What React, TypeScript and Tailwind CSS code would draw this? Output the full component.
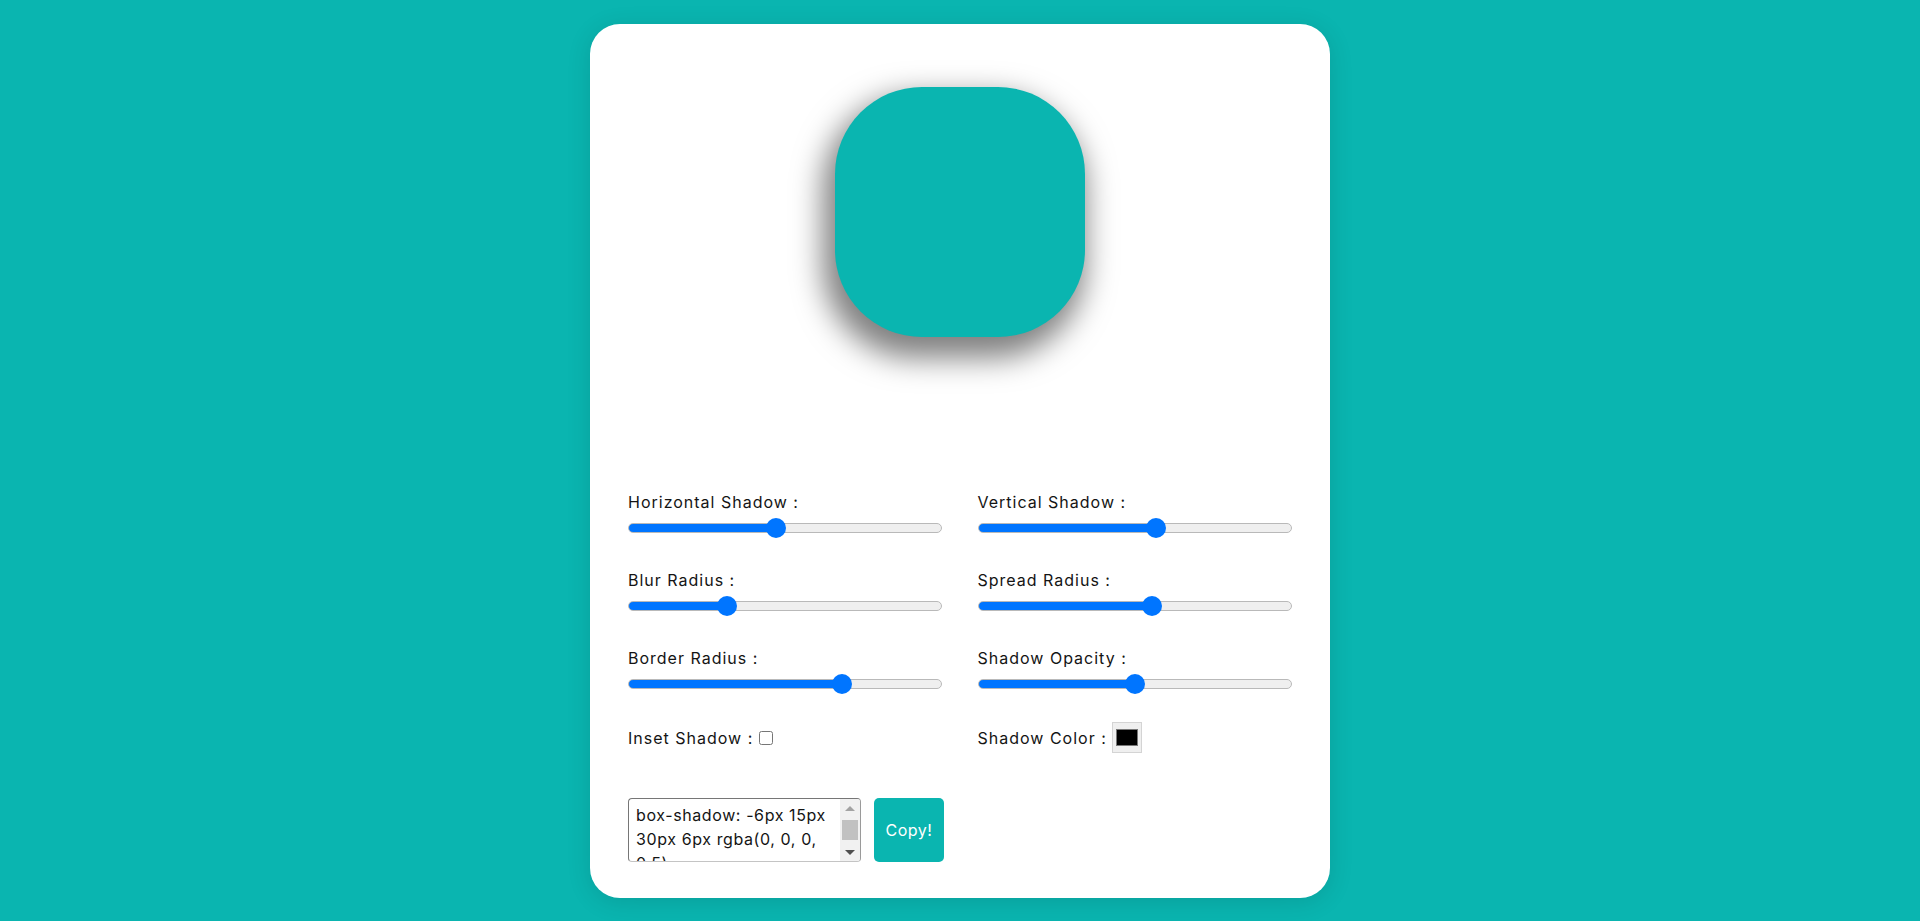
import { useState } from 'react'

const TEAL = '#0ab5b0'

interface SliderProps {
  label: string
  min: number
  max: number
  step?: number
  value: number
  onChange: (v: number) => void
}

function Slider({ label, min, max, step = 1, value, onChange }: SliderProps) {
  const pct = ((value - min) / (max - min)) * 100
  return (
    <div className="flex flex-col">
      <label className="text-[16px] leading-[24px] tracking-[1px] text-[#141414]">{label}</label>
      <input
        type="range"
        min={min}
        max={max}
        step={step}
        value={value}
        onChange={(e) => onChange(Number(e.target.value))}
        className="mt-[9px] h-[10px] w-[314px] cursor-pointer appearance-none rounded-full border border-[#b9b9b9] outline-none [&::-webkit-slider-thumb]:h-[20px] [&::-webkit-slider-thumb]:w-[20px] [&::-webkit-slider-thumb]:appearance-none [&::-webkit-slider-thumb]:rounded-full [&::-webkit-slider-thumb]:bg-[#0075ff]"
        style={{
          background: `linear-gradient(to right, #0075ff 0%, #0075ff ${pct}%, #efefef ${pct}%, #efefef 100%)`,
        }}
      />
    </div>
  )
}

// classic scrollbar look for the output box (headless chrome hides real ones)
function FakeScrollbar() {
  return (
    <div className="pointer-events-none absolute top-[1px] right-[1px] bottom-[1px] flex w-[20px] flex-col items-center rounded-tr-[3px] rounded-br-[3px] bg-[#f1f1f1]">
      <div className="flex h-[18px] items-center justify-center">
        <div className="h-0 w-0 border-x-[5px] border-b-[5px] border-x-transparent border-b-[#a3a3a3]" />
      </div>
      <div className="mt-[3px] h-[20px] w-[16px] bg-[#c1c1c1]" />
      <div className="flex-1" />
      <div className="flex h-[18px] items-center justify-center">
        <div className="h-0 w-0 border-x-[5px] border-t-[5px] border-x-transparent border-t-[#505050]" />
      </div>
    </div>
  )
}

export default function App() {
  const [h, setH] = useState(-6)
  const [v, setV] = useState(15)
  const [blur, setBlur] = useState(30)
  const [spread, setSpread] = useState(6)
  const [radius, setRadius] = useState(87)
  const [opacity, setOpacity] = useState(0.5)
  const [inset, setInset] = useState(false)
  const [color, setColor] = useState('#000000')

  const r = parseInt(color.slice(1, 3), 16)
  const g = parseInt(color.slice(3, 5), 16)
  const b = parseInt(color.slice(5, 7), 16)
  const shadow = `${inset ? 'inset ' : ''}${h}px ${v}px ${blur}px ${spread}px rgba(${r}, ${g}, ${b}, ${opacity})`

  return (
    <div
      className="min-h-screen w-full bg-[#0ab5b0] pt-[24px] pb-[20px]"
      style={{ fontFamily: 'Inter, "Open Sans", sans-serif' }}
    >
      <div className="mx-auto w-[740px] rounded-[30px] bg-white px-[38px] pt-[63px] pb-[36px] shadow-[0_4px_24px_rgba(0,0,0,0.12)]">
        <div className="flex justify-center">
          <div
            className="h-[250px] w-[250px] bg-[#0ab5b0]"
            style={{ boxShadow: shadow, borderRadius: radius }}
          />
        </div>

        <div className="mt-[153px] grid grid-cols-2 gap-x-[35px] gap-y-[35px]">
          <Slider label="Horizontal Shadow :" min={-100} max={100} value={h} onChange={setH} />
          <Slider label="Vertical Shadow :" min={-100} max={100} value={v} onChange={setV} />
          <Slider label="Blur Radius :" min={0} max={100} value={blur} onChange={setBlur} />
          <Slider label="Spread Radius :" min={-50} max={50} value={spread} onChange={setSpread} />
          <Slider label="Border Radius :" min={0} max={125} value={radius} onChange={setRadius} />
          <Slider label="Shadow Opacity :" min={0} max={1} step={0.01} value={opacity} onChange={setOpacity} />
        </div>

        <div className="mt-[33px] grid h-[31px] grid-cols-2 gap-x-[35px]">
          <div className="flex items-center text-[16px] tracking-[1px] text-[#141414]">
            <span>Inset Shadow :</span>
            <input
              type="checkbox"
              checked={inset}
              onChange={(e) => setInset(e.target.checked)}
              className="ml-[6px] h-[14px] w-[14px]"
            />
          </div>
          <div className="flex items-center text-[16px] tracking-[1px] text-[#141414]">
            <span>Shadow Color :</span>
            <input
              type="color"
              value={color}
              onChange={(e) => setColor(e.target.value)}
              className="ml-[5px] h-[31px] w-[30px] cursor-pointer appearance-none border border-[#d4d4d4] bg-[#efefef] p-0 [&::-webkit-color-swatch]:border [&::-webkit-color-swatch]:border-[#777] [&::-webkit-color-swatch-wrapper]:px-[3px] [&::-webkit-color-swatch-wrapper]:py-[6px]"
            />
          </div>
        </div>

        <div className="mt-[45px] flex items-start gap-[13px]">
          <div className="relative h-[64px] w-[233px]">
            <textarea
              readOnly
              value={`box-shadow: ${shadow};`}
              className="block h-full w-full resize-none overflow-hidden rounded-[4px] border border-[#767676] border-r-[#9a9a9a] border-b-[#c4c4c4] py-[4px] pr-[22px] pl-[7px] text-[16px] leading-[24px] tracking-[0.6px] text-[#141414] outline-none"
            />
            <FakeScrollbar />
          </div>
          <button
            className="h-[64px] w-[70px] rounded-[5px] text-[16px] tracking-[0.5px] text-white"
            style={{ backgroundColor: TEAL }}
          >
            Copy!
          </button>
        </div>
      </div>
    </div>
  )
}
